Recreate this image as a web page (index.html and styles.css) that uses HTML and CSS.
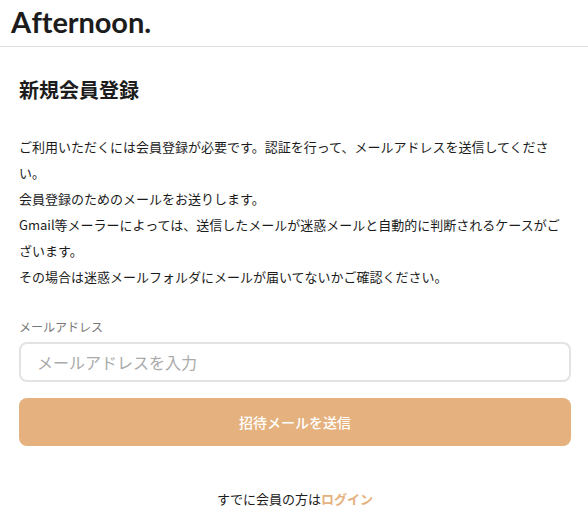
FILE: index.html
```html
<!DOCTYPE html>
<html lang="ja">
<head>
    <meta charset="UTF-8">
    <meta name="viewport" content="width=device-width, initial-scale=1.0">
    <title>新規会員登録</title>
    <link rel="stylesheet" href="styles.css">
</head>
<body>
    <header class="header">
        <a class="logo" href="#"><span class="logo-initial">A</span>fternoon.</a>
    </header>
    <main class="container">
        <h1>新規会員登録</h1>
        <p class="description">
            ご利用いただくには会員登録が必要です。認証を行って、メールアドレスを送信してください。<br>
            会員登録のためのメールをお送りします。<br>
            Gmail等メーラーによっては、送信したメールが迷惑メールと自動的に判断されるケースがございます。<br>
            その場合は迷惑メールフォルダにメールが届いてないかご確認ください。
        </p>
        <form>
            <label for="email">メールアドレス</label>
            <input type="email" id="email" placeholder="メールアドレスを入力">
            <button type="submit">招待メールを送信</button>
        </form>
        <p class="login">すでに会員の方は<a href="#">ログイン</a></p>
    </main>
</body>
</html>
```
FILE: styles.css
```css
* {
    box-sizing: border-box;
}

body {
    margin: 0;
    background: #fff;
    color: #1c1c1c;
    font-family: "Noto Sans CJK JP", sans-serif;
    font-size: 13px;
    overflow: hidden;
}

.header {
    height: 47px;
    padding: 0 11px;
    border-bottom: 1px solid #e2e2e2;
}

.logo {
    display: block;
    color: #1c1c1c;
    font-family: Lato, sans-serif;
    font-size: 29px;
    font-weight: 700;
    font-variant-ligatures: none;
    letter-spacing: -0.1px;
    line-height: 43px;
    text-decoration: none;
}

.logo-initial {
    margin-right: 0.5px;
}

.container {
    padding: 28px 17px 0 19px;
}

h1 {
    margin: 0;
    font-size: 20px;
    line-height: 30px;
}

.description {
    margin: 29px 0 0;
    line-height: 26px;
}

form {
    display: flex;
    flex-direction: column;
    margin-top: 28px;
}

label {
    color: #777;
    font-size: 12px;
    line-height: 18px;
}

input {
    height: 40px;
    margin-top: 6px;
    padding: 0 16px;
    border: 2px solid #e3e3e3;
    border-radius: 8px;
    font-family: inherit;
    font-size: 16px;
}

input::placeholder {
    color: #aaa;
}

button {
    height: 48px;
    margin-top: 16px;
    border: none;
    border-radius: 8px;
    background: #e5b17e;
    color: #fff;
    font-family: inherit;
    font-size: 14px;
    font-weight: 500;
    cursor: pointer;
}

.login {
    margin: 40px 0 0;
    line-height: 26px;
    text-align: center;
}

.login a {
    color: #e5b17e;
    font-weight: 700;
    text-decoration: none;
}
```
